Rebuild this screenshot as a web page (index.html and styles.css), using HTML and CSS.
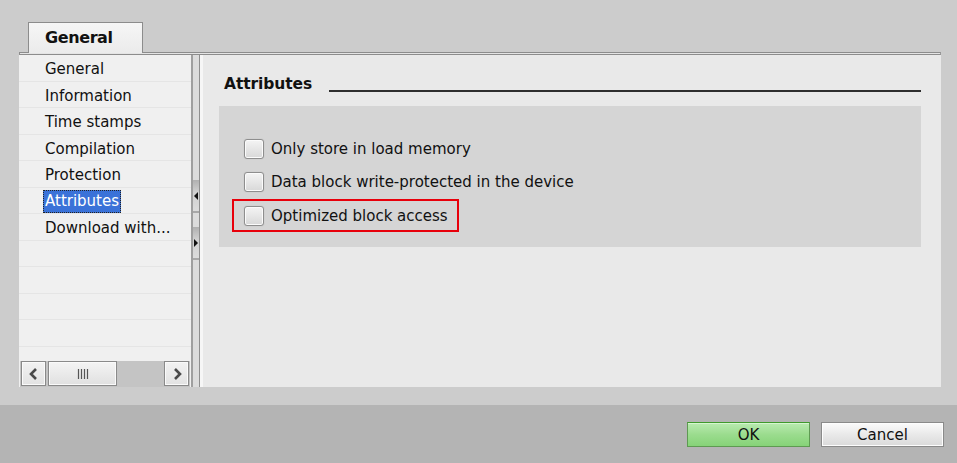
FILE: index.html
```html
<!DOCTYPE html>
<html>
<head>
<meta charset="utf-8">
<link rel="stylesheet" href="styles.css">
</head>
<body>
<div class="app">
  <div class="top">
    <div class="tabstrip"><div class="tab">General</div></div>
    <div class="tabline"></div>
    <div class="content">
      <div class="nav">
        <ul class="navlist">
          <li>General</li>
          <li>Information</li>
          <li>Time stamps</li>
          <li>Compilation</li>
          <li>Protection</li>
          <li><span class="sel">Attributes</span></li>
          <li>Download with...</li>
          <li></li>
          <li></li>
          <li></li>
          <li></li>
          <li></li>
        </ul>
        <div class="hscroll">
          <div class="sbtn"><svg width="22" height="22" viewBox="0 0 22 22"><path d="M13 6 L8 11 L13 16" fill="none" stroke="#4a4a4a" stroke-width="2.6"/></svg></div>
          <div class="track">
            <div class="thumb"><svg width="12" height="12" viewBox="0 0 12 12"><path d="M1.5 1V11M4.5 1V11M7.5 1V11M10.5 1V11" stroke="#555" stroke-width="1.2"/></svg></div>
          </div>
          <div class="sbtn"><svg width="22" height="22" viewBox="0 0 22 22"><path d="M9 6 L14 11 L9 16" fill="none" stroke="#4a4a4a" stroke-width="2.6"/></svg></div>
        </div>
      </div>
      <div class="splitter">
        <div class="splitbtn"><svg width="6" height="8" viewBox="0 0 6 8"><path d="M5 0 L1 4 L5 8 Z" fill="#111"/></svg></div>
        <div class="splitbtn"><svg width="6" height="8" viewBox="0 0 6 8"><path d="M1 0 L5 4 L1 8 Z" fill="#111"/></svg></div>
      </div>
      <div class="main">
        <div class="heading"><span class="htext">Attributes</span><span class="rule"></span></div>
        <div class="group">
          <label class="opt"><span class="cb"></span>Only store in load memory</label>
          <label class="opt"><span class="cb"></span>Data block write-protected in the device</label>
          <label class="opt marked"><span class="cb"></span>Optimized block access</label>
        </div>
      </div>
    </div>
  </div>
  <div class="footer">
    <button class="btn ok">OK</button>
    <button class="btn">Cancel</button>
  </div>
</div>
</body>
</html>
```
FILE: styles.css
```css
* { box-sizing: border-box; }
html, body { margin: 0; padding: 0; }
body {
  background: #cccccc;
  font-family: "DejaVu Sans", Verdana, sans-serif;
  font-size: 15px;
  color: #111;
  width: 957px;
  height: 463px;
  overflow: hidden;
}
.app { display: flex; flex-direction: column; height: 463px; }
.top {
  height: 405px;
  padding: 22px 16px 0 19px;
  display: flex;
  flex-direction: column;
}
.tabstrip { display: flex; padding-left: 9px; height: 30px; position: relative; z-index: 1; }
.tab {
  width: 115px;
  height: 31px;
  border: 1px solid #8c8c8c;
  border-bottom: none;
  background: linear-gradient(#f6f6f6, #ebebeb);
  font-weight: bold;
  font-size: 16px;
  letter-spacing: -0.4px;
  padding-left: 16px;
  line-height: 30px;
  color: #111;
}
.tabline {
  height: 3px;
  border: 1px solid #8c8c8c;
  border-right-color: #9a9a9a;
  background: #e4e4e4;
}
.content {
  height: 332px;
  display: flex;
}
.nav {
  width: 172px;
  background: #f0f0f0;
  display: flex;
  flex-direction: column;
}
.navlist {
  list-style: none;
  margin: 0;
  padding: 0;
  flex: 1;
  overflow: hidden;
}
.navlist li {
  height: 26.5px;
  display: flex;
  align-items: center;
  padding: 3px 0 0 26px;
  border-bottom: 1px solid #e5e5e5;
  white-space: nowrap;
  color: #111;
}
.sel {
  display: inline-block;
  background: #3a72d8;
  color: #fff;
  border: 1px dotted #222;
  line-height: 17px;
  padding: 2px 1px;
  margin: -1px 0 0 -2px;
}
.hscroll {
  height: 26px;
  display: flex;
  padding: 0 1px 1px 1px;
  background: #c4c4c4;
  border-left: 1px solid #f0f0f0;
  border-right: 1px solid #f0f0f0;
}
.sbtn {
  width: 25px;
  height: 25px;
  border: 1px solid #8a8a8a;
  box-shadow: inset 0 0 0 1px #fafafa;
  background: linear-gradient(#f2f2f2, #e2e2e2);
  display: flex;
  align-items: center;
  justify-content: center;
}
.track { flex: 1; display: flex; padding-left: 2px; }
.thumb {
  width: 69px;
  height: 25px;
  border: 1px solid #8a8a8a;
  box-shadow: inset 0 0 0 1px #fafafa;
  background: linear-gradient(#f4f4f4, #e0e0e0);
  display: flex;
  align-items: center;
  justify-content: center;
}
.splitter {
  width: 12px;
  background: linear-gradient(to right, #9f9f9f 0, #9f9f9f 2px, #dcdcdc 2px, #dcdcdc 8px, #8e8e8e 8px, #8e8e8e 9px, #f6f6f6 9px);
  display: flex;
  flex-direction: column;
  padding-top: 125px;
  gap: 14px;
}
.splitbtn {
  width: 6px;
  margin-left: 2px;
  height: 33px;
  background: linear-gradient(#b0b0b0, #d0d0d0 40%, #dcdcdc);
  border-bottom: 2px solid #a8a8a8;
  display: flex;
  align-items: center;
  justify-content: center;
}
.main {
  flex: 1;
  background: #e9e9e9;
  padding: 19px 20px 0 16px;
}
.heading {
  display: flex;
  align-items: flex-end;
  height: 20px;
  padding-left: 5px;
  margin-bottom: 12px;
}
.htext {
  font-weight: bold;
  font-size: 15.5px;
  line-height: 20px;
  letter-spacing: -0.1px;
  color: #111;
  margin-right: 17px;
}
.rule {
  flex: 1;
  height: 2px;
  background: #2e2e2e;
  margin-bottom: 2px;
}
.group {
  height: 141px;
  background: #d5d5d5;
  padding-top: 26px;
  display: flex;
  flex-direction: column;
  align-items: flex-start;
}
.opt {
  display: flex;
  align-items: center;
  height: 33.5px;
  padding-left: 25px;
  color: #111;
  white-space: nowrap;
}
.cb {
  width: 20px;
  height: 20px;
  border: 1px solid #8e8e8e;
  border-radius: 3px;
  background: linear-gradient(#f4f4f4, #d8d8d8);
  box-shadow: inset 0 0 0 1px #fbfbfb, 0 0 1px #aaa;
  margin-right: 7px;
  flex: none;
}
.marked {
  height: 33px;
  margin-left: 13px;
  padding: 0 9px 0 10px;
  border: 2px solid #e8000b;
}
.footer {
  height: 58px;
  background: #b4b4b4;
  display: flex;
  justify-content: flex-end;
  align-items: flex-start;
  padding: 17px 13px 0 0;
  gap: 11px;
}
.btn {
  width: 123px;
  height: 25px;
  font-family: "DejaVu Sans", Verdana, sans-serif;
  font-size: 15px;
  color: #111;
  border: 1px solid #8a8a8a;
  background: linear-gradient(#fbfbfb, #e9e9e9 50%, #dadada);
  box-shadow: inset 0 0 0 1px #fdfdfd;
  padding: 0;
  line-height: 22px;
}
.ok {
  border-color: #5e9a52;
  border-top-color: #3f9a2c;
  background: linear-gradient(#b9eab0, #9bdc8e 50%, #86d378);
  box-shadow: inset 0 1px 0 #d6f5d0;
}
```
